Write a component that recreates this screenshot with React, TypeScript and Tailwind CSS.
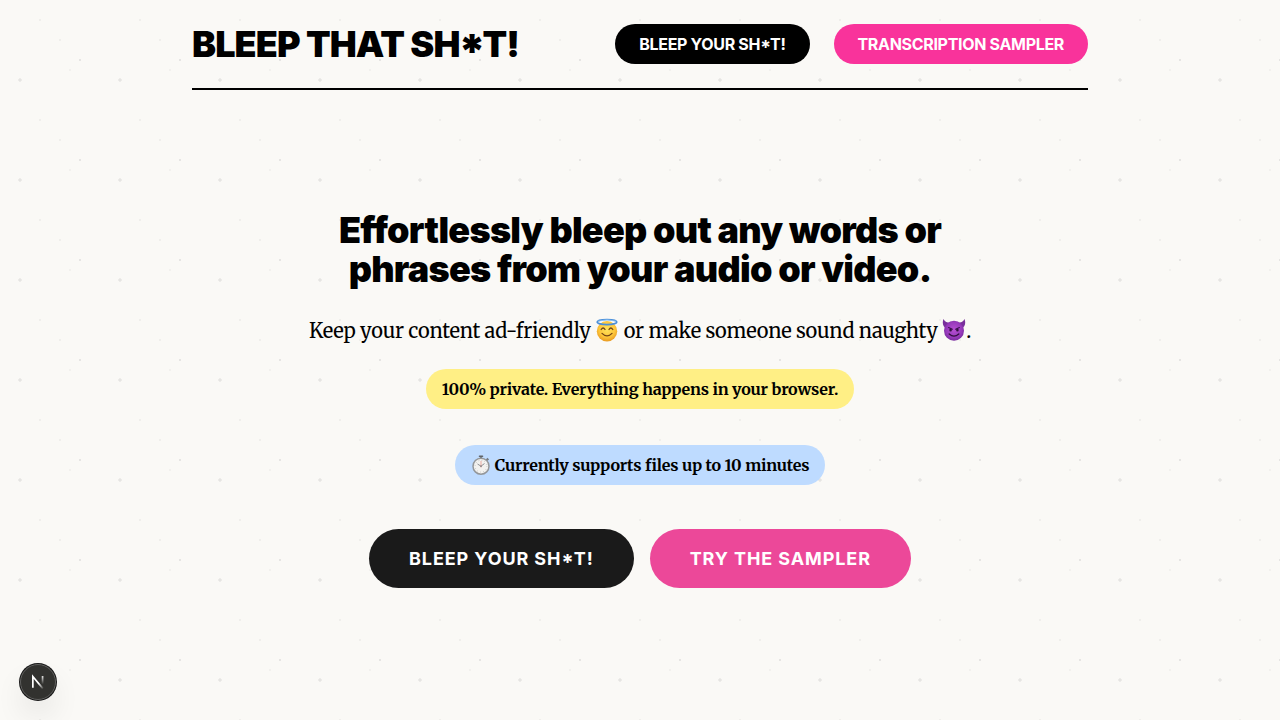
const dots =
  'bg-[radial-gradient(circle_at_20px_80px,rgba(0,0,0,0.08)_1px,rgba(0,0,0,0.03)_2px,transparent_2px),radial-gradient(circle_at_80px_60px,rgba(0,0,0,0.08)_1px,transparent_1px),radial-gradient(circle_at_40px_20px,rgba(0,0,0,0.04)_1px,transparent_1px),radial-gradient(circle_at_60px_40px,rgba(0,0,0,0.04)_1px,transparent_1px),radial-gradient(circle_at_70px_70px,rgba(0,0,0,0.03)_1px,transparent_1px)] bg-[length:100px_100px]';

const serif = "font-['Merriweather','DejaVu_Serif',serif] tracking-[-0.01em]";

function Halo() {
  return (
    <svg viewBox="0 0 24 24" className="inline-block size-6 align-middle -mt-1" role="img" aria-label="smiling face with halo">
      <defs>
        <radialGradient id="haloFace" cx="50%" cy="40%" r="60%">
          <stop offset="0" stopColor="#ffe45c" />
          <stop offset=".65" stopColor="#fdc63a" />
          <stop offset="1" stopColor="#e99a21" />
        </radialGradient>
      </defs>
      <circle cx="12" cy="13.2" r="10.2" fill="url(#haloFace)" />
      <ellipse cx="12" cy="4.1" rx="9.8" ry="2.6" fill="none" stroke="#4b8fd9" strokeWidth="1.7" />
      <path d="M3 3.2Q12 .2 21 3.2" fill="none" stroke="#8fc5f5" strokeWidth=".7" />
      <path d="M6.2 11.5Q8.2 8.5 10 11.5M14 11.5Q15.8 8.5 17.8 11.5" fill="none" stroke="#6c4017" strokeWidth="1.3" strokeLinecap="round" />
      <path d="M7 15.4Q12 20.5 17 15.4" fill="none" stroke="#754515" strokeWidth="1.3" strokeLinecap="round" />
    </svg>
  );
}

function Devil() {
  return (
    <svg viewBox="0 0 24 24" className="inline-block size-6 align-middle -mt-1" role="img" aria-label="smiling face with horns">
      <defs>
        <radialGradient id="devilFace" cx="50%" cy="45%" r="60%">
          <stop offset="0" stopColor="#b650d2" />
          <stop offset=".65" stopColor="#973abb" />
          <stop offset="1" stopColor="#702895" />
        </radialGradient>
      </defs>
      <path d="M1.4 1C-.2 6 1.5 9 4.4 10.5L9 4.8C5.5 5 3 4 1.4 1ZM22.6 1C24.2 6 22.5 9 19.6 10.5L15 4.8C18.5 5 21 4 22.6 1Z" fill="#79309c" />
      <circle cx="12" cy="12.8" r="10" fill="url(#devilFace)" />
      <path d="M6.6 9.6L10.4 11.3M17.4 9.6L13.6 11.3" stroke="#38104d" strokeWidth="1.1" strokeLinecap="round" />
      <ellipse cx="8.6" cy="12" rx="1.3" ry="1.5" fill="#32103f" />
      <ellipse cx="15.4" cy="12" rx="1.3" ry="1.5" fill="#32103f" />
      <path d="M7.2 16Q12 20.3 16.8 16" fill="none" stroke="#32103f" strokeWidth="1.3" strokeLinecap="round" />
    </svg>
  );
}

function Stopwatch() {
  return (
    <svg viewBox="0 0 20 20" className="size-5" role="img" aria-label="stopwatch">
      <path d="M10 4V1.2M15.5 5.3L17.3 3.6" stroke="#777b80" strokeWidth="2.2" />
      <path d="M8.5 1.3H11.5" stroke="#5f6367" strokeWidth="1.6" strokeLinecap="round" />
      <circle cx="10" cy="11.2" r="8" fill="#f3f2ef" stroke="#94979a" strokeWidth="1.5" />
      <circle cx="10" cy="11.2" r="5.9" fill="none" stroke="#a6a7a8" strokeWidth="1" strokeDasharray=".5 2.59" />
      <path d="M10 11.2L6.5 9M10 11.2L13.5 8.5" stroke="#73767b" strokeWidth=".8" />
      <path d="M10 12.5V6" stroke="#e58c83" strokeWidth=".7" />
      <circle cx="10" cy="11.2" r=".8" fill="#7c7f83" />
    </svg>
  );
}

export default function App() {
  return (
    <div className={`min-h-screen bg-[#faf9f6] px-6 font-['Inter',sans-serif] text-black ${dots}`}>
      <div className="mx-auto max-w-4xl">
        <header className="flex flex-wrap items-center justify-between gap-4 border-b-2 border-black py-6 [font-feature-settings:'case']">
          <a href="#home" className="text-4xl font-black tracking-tight">BLEEP THAT SH*T!</a>
          <nav className="flex flex-wrap gap-6 font-bold leading-6 tracking-[-0.02em] text-white">
            <a href="#bleep" className="rounded-full bg-black px-6 py-2">BLEEP YOUR SH*T!</a>
            <a href="#sampler" className="rounded-full bg-[#f9339b] px-6 py-2">TRANSCRIPTION SAMPLER</a>
          </nav>
        </header>

        <main className="flex flex-col items-center pt-[121px] pb-16 text-center">
          <h1 className="max-w-2xl text-4xl leading-[39px] font-black tracking-[-0.02em]">
            Effortlessly bleep out any words or phrases from your audio or video.
          </h1>
          <p className={`mt-7 text-xl leading-7 ${serif}`}>
            Keep your content ad-friendly <Halo /> or make someone sound naughty <Devil />.
          </p>
          <p className={`mt-6 rounded-full bg-[#ffef85] px-4 py-2 leading-6 font-bold ${serif}`}>
            100% private. Everything happens in your browser.
          </p>
          <p className={`mt-9 flex items-center gap-1 rounded-full bg-[#bedbff] px-4 py-2 leading-6 font-bold ${serif}`}>
            <Stopwatch /> Currently supports files up to 10 minutes
          </p>
          <div className="mt-11 flex flex-wrap justify-center gap-4 text-lg leading-[27px] font-bold tracking-wider text-white [font-feature-settings:'case']">
            <a href="#bleep" className="rounded-full bg-[#1a1a1a] px-10 py-4">BLEEP YOUR SH*T!</a>
            <a href="#sampler" className="rounded-full bg-[#ec4899] px-10 py-4">TRY THE SAMPLER</a>
          </div>
        </main>
      </div>

      <button
        type="button"
        aria-label="Open developer tools"
        className="fixed bottom-5 left-5 flex size-9 items-center justify-center rounded-full border border-[#60605e] bg-[#32322f] shadow-[0_0_0_1px_#171717,0_16px_32px_-8px_rgba(0,0,0,0.24)]"
      >
        <svg viewBox="0 0 14 14" className="size-4" fill="none" aria-hidden="true">
          <defs>
            <linearGradient id="markDiagonal" x1="8" y1="8" x2="12" y2="13" gradientUnits="userSpaceOnUse">
              <stop stopColor="#fff" />
              <stop offset="1" stopColor="#fff" stopOpacity="0" />
            </linearGradient>
            <linearGradient id="markStem" x1="11" y1="1" x2="11" y2="9" gradientUnits="userSpaceOnUse">
              <stop stopColor="#fff" />
              <stop offset="1" stopColor="#fff" stopOpacity="0" />
            </linearGradient>
          </defs>
          <path d="M2.5 12V2.2L11.3 12.8" stroke="url(#markDiagonal)" strokeWidth="1.5" />
          <path d="M11 1.8V9" stroke="url(#markStem)" strokeWidth="1.5" />
        </svg>
      </button>
    </div>
  );
}
